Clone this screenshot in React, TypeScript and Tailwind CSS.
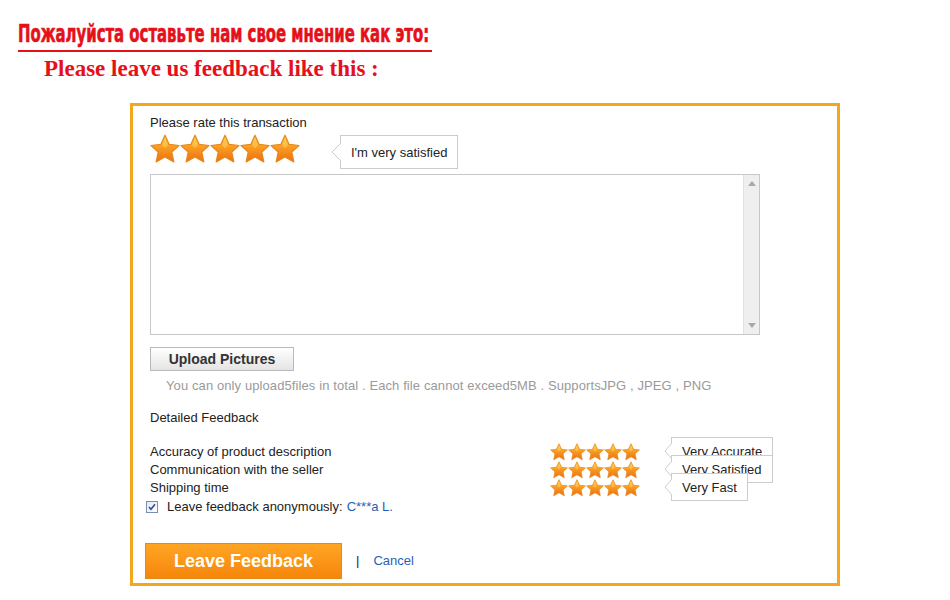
import React from "react";

function Star({ size, id }: { size: number; id: string }) {
  return (
    <svg width={size} height={size} viewBox="0 0 100 100" className="block shrink-0">
      <defs>
        <linearGradient id={id} x1="0" y1="0" x2="0" y2="1">
          <stop offset="0" stopColor="#ffd243" />
          <stop offset="0.45" stopColor="#f99c22" />
          <stop offset="1" stopColor="#ec6f12" />
        </linearGradient>
      </defs>
      <polygon
        points="50,4 64.1,34.6 96.6,38.3 72.8,60.4 79.4,93 50,76.6 20.6,93 27.2,60.4 3.4,38.3 35.9,34.6"
        fill={`url(#${id})`}
        stroke="#e9861a"
        strokeWidth="4"
        strokeLinejoin="round"
      />
      <path d="M50 14 L60 37 L50 48 L40 37 Z" fill="#ffe27a" opacity="0.4" />
    </svg>
  );
}

function Stars({ size, prefix }: { size: number; prefix: string }) {
  return (
    <div className="flex">
      {[0, 1, 2, 3, 4].map((i) => (
        <Star key={i} size={size} id={`${prefix}-${i}`} />
      ))}
    </div>
  );
}

function SmallTip({ text }: { text: string }) {
  return (
    <div className="absolute left-[113px] top-[-6px] flex h-[28px] items-center whitespace-nowrap">
      <svg width="8" height="16" viewBox="0 0 8 16" className="relative left-[1px] block">
        <path d="M8 0 L1 8 L8 16" fill="#ffffff" stroke="#cccccc" strokeWidth="1" />
      </svg>
      <div className="flex h-[28px] items-center whitespace-nowrap border border-[#cccccc] bg-white px-[10px] text-[13px] leading-none text-[#222]">
        {text}
      </div>
    </div>
  );
}

export default function App() {
  const rows: [string, string][] = [
    ["Accuracy of product description", "Very Accurate"],
    ["Communication with the seller", "Very Satisfied"],
    ["Shipping time", "Very Fast"],
  ];
  return (
    <div className="relative h-[600px] w-[950px] overflow-hidden bg-white font-['Liberation_Sans',Arial,sans-serif] text-[13px] text-[#222]">
      <div className="pl-[18px] pt-[20px]">
        <div className="h-[28px] whitespace-nowrap">
          <span className="inline-block origin-left scale-x-[0.69] font-['DejaVu_Sans_Condensed','DejaVu_Sans',sans-serif] text-[24px] font-bold leading-[28px] text-[#e5101a] [-webkit-text-stroke:0.6px_#e5101a]">
            Пожалуйста оставьте нам свое мнение как это:
          </span>
        </div>
        <div className="mt-[2px] h-[2px] w-[414px] bg-[#e5101a]" />
      </div>
      <div className="ml-[44px] mt-[4px] whitespace-nowrap font-['Liberation_Serif','Times_New_Roman',serif] text-[23px] font-bold leading-[26px] text-[#e5101a]">
        Please leave us feedback like this :
      </div>
      <div className="ml-[130px] mt-[21px] box-border h-[483px] w-[710px] border-[3px] border-[#f2a71f] pl-[17px] pt-[9px]">
        <div className="leading-[16px]">Please rate this transaction</div>
        <div className="mt-[3px] flex h-[35px] items-start">
          <Stars size={30} prefix="big" />
          <div className="ml-[30px] mt-[1px] flex h-[34px] items-center">
            <svg width="10" height="18" viewBox="0 0 10 18" className="relative left-[1px] block">
              <path d="M10 0 L1 9 L10 18" fill="#ffffff" stroke="#cccccc" strokeWidth="1" />
            </svg>
            <div className="flex h-[34px] items-center border border-[#cccccc] bg-white px-[10px] leading-none text-[#222]">
              I'm very satisfied
            </div>
          </div>
        </div>
        <div className="mt-[5px] flex h-[161px] w-[610px] border border-[#c8c8c8] bg-white">
          <div className="flex-1" />
          <div className="flex w-[16px] flex-col items-center justify-between border-l border-[#e2e2e2] bg-[#efefef] py-[6px]">
            <svg width="8" height="5" viewBox="0 0 8 5" className="block">
              <path d="M0 5 L4 0 L8 5 Z" fill="#a8a8a8" />
            </svg>
            <svg width="8" height="5" viewBox="0 0 8 5" className="block">
              <path d="M0 0 L4 5 L8 0 Z" fill="#a8a8a8" />
            </svg>
          </div>
        </div>
        <div className="mt-[12px] flex h-[24px] w-[144px] items-center justify-center border border-[#b9b9b9] bg-gradient-to-b from-[#ffffff] to-[#e4e4e4] text-[14px] font-bold leading-none text-[#333]">
          Upload Pictures
        </div>
        <div className="ml-[16px] mt-[7px] leading-[16px] tracking-[0.1px] text-[#9a9a9a]">
          You can only upload5files in total . Each file cannot exceed5MB . SupportsJPG , JPEG , PNG
        </div>
        <div className="mt-[16px] leading-[16px]">Detailed Feedback</div>
        <div className="mt-[17px] flex flex-col">
          {rows.map(([label, tip], i) => (
            <div key={label} className="flex h-[18px] items-center">
              <div className="w-[400px] leading-[18px]">{label}</div>
              <div className="relative">
                <Stars size={18} prefix={`s${i}`} />
                <SmallTip text={tip} />
              </div>
            </div>
          ))}
        </div>
        <div className="ml-[-4px] mt-[1px] flex h-[18px] items-center">
          <div className="flex h-[12px] w-[12px] items-center justify-center border border-[#7b8fb0] bg-gradient-to-br from-[#e4e8ee] to-[#ffffff]">
            <svg width="8" height="8" viewBox="0 0 8 8" className="block">
              <path d="M1 4 L3 6.3 L7 1.3" fill="none" stroke="#2a4fa8" strokeWidth="1.6" />
            </svg>
          </div>
          <span className="ml-[9px]">Leave feedback anonymously:</span>
          <span className="ml-[4px] text-[#1f62b5]">C***a L.</span>
        </div>
        <div className="ml-[-5px] mt-[27px] flex items-center">
          <div className="flex h-[36px] w-[197px] items-center justify-center border border-[#e58a12] bg-gradient-to-b from-[#ffa523] to-[#f6860b] text-[18px] font-bold leading-none text-white">
            Leave Feedback
          </div>
          <span className="ml-[14px] text-[#222]">|</span>
          <span className="ml-[14px] text-[#1f62b5]">Cancel</span>
        </div>
      </div>
    </div>
  );
}
